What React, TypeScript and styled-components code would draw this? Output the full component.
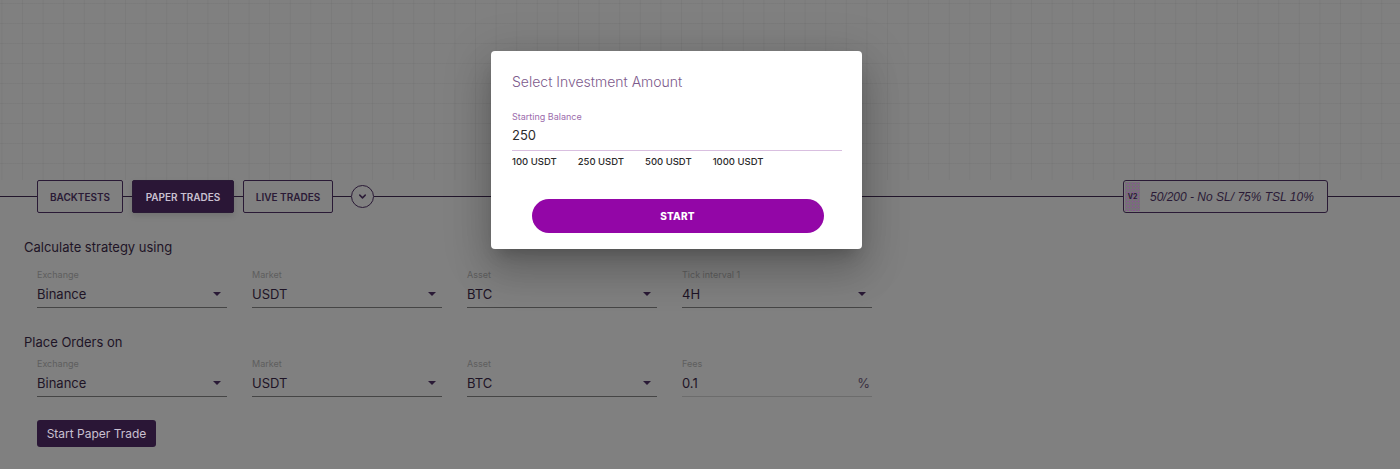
import React from "react";
import styled, { createGlobalStyle } from "styled-components";

const GlobalStyle = createGlobalStyle`
  html, body { margin: 0; padding: 0; }
  body {
    background: #808080;
    font-family: Inter, "Noto Sans", "Liberation Sans", sans-serif;
    color: #1e1426;
  }
  * { box-sizing: border-box; }
`;

const Page = styled.div`
  position: relative;
  width: 1400px;
  height: 469px;
  overflow: hidden;
  background: #808080;
`;

const ChartArea = styled.div`
  height: 180px;
  background-color: #808080;
  background-image:
    linear-gradient(to right, rgba(60, 60, 60, 0.07) 1px, transparent 1px),
    linear-gradient(to bottom, rgba(60, 60, 60, 0.07) 1px, transparent 1px);
  background-size: 20.6px 20px;
  background-position: 22px 3px;
`;

const TabBar = styled.div`
  display: flex;
  align-items: center;
  height: 33px;
`;

const Line = styled.div<{ $w?: number }>`
  height: 1px;
  background: #22162c;
  ${(p) => (p.$w ? `width: ${p.$w}px; flex: none;` : `flex: 1;`)}
`;

const Tab = styled.button<{ $active?: boolean; $w: number }>`
  flex: none;
  width: ${(p) => p.$w}px;
  height: 33px;
  padding: 0;
  border: 1px solid #2a1a36;
  border-radius: 2px;
  background: ${(p) => (p.$active ? "#2a1636" : "transparent")};
  color: ${(p) => (p.$active ? "#c9c0d0" : "#2a1a36")};
  font-family: inherit;
  font-size: 10px;
  font-weight: 600;
  text-transform: uppercase;
  box-shadow: ${(p) => (p.$active ? "0 3px 6px rgba(0,0,0,0.12)" : "none")};
`;

const CircleBtn = styled.div`
  flex: none;
  width: 23px;
  height: 23px;
  border: 1px solid #2a1a36;
  border-radius: 50%;
  display: flex;
  align-items: center;
  justify-content: center;
`;

const Badge = styled.div`
  flex: none;
  width: 205px;
  height: 33px;
  border: 1px solid #2a1a36;
  border-radius: 3px;
  display: flex;
  align-items: stretch;
  padding: 1px;
`;

const BadgeTag = styled.div`
  width: 15px;
  flex: none;
  display: flex;
  align-items: center;
  justify-content: center;
  font-size: 7px;
  font-weight: 700;
  color: #2a1a36;
  background-color: #767078;
  background-image: radial-gradient(circle, rgba(170, 40, 190, 0.5) 0.6px, transparent 1px);
  background-size: 3px 3px;
`;

const BadgeText = styled.div`
  display: flex;
  align-items: center;
  padding-left: 10px;
  font-family: "Liberation Sans", Arial, sans-serif;
  font-size: 12px;
  font-style: italic;
  color: #2a1a36;
  white-space: nowrap;
`;

const Form = styled.div`
  padding-left: 24px;
`;

const SectionTitle = styled.div<{ $mt: number }>`
  margin-top: ${(p) => p.$mt}px;
  font-size: 13px;
  line-height: 16px;
  color: #1e1426;
`;

const FieldRow = styled.div<{ $mt: number }>`
  display: grid;
  grid-template-columns: repeat(4, 190px);
  column-gap: 25px;
  margin-top: ${(p) => p.$mt}px;
  margin-left: 13px;
`;

const Field = styled.div<{ $light?: boolean }>`
  display: flex;
  flex-direction: column;
  border-bottom: 1px solid ${(p) => (p.$light ? "#6c6c6c" : "#454545")};
`;

const FieldLabel = styled.div`
  font-size: 9px;
  line-height: 12px;
  color: #5e5e5e;
`;

const FieldValue = styled.div`
  display: flex;
  align-items: center;
  justify-content: space-between;
  margin-top: 4px;
  padding-bottom: 4px;
  font-size: 13px;
  line-height: 18px;
  color: #1e1426;
`;

const Caret = styled.span`
  width: 0;
  height: 0;
  margin-right: 6px;
  border-left: 4px solid transparent;
  border-right: 4px solid transparent;
  border-top: 4px solid #2a1a36;
`;

const Suffix = styled.span`
  margin-right: 2px;
  color: #3a3040;
`;

const PrimaryDark = styled.button`
  margin-top: 23px;
  margin-left: 13px;
  width: 119px;
  height: 27px;
  padding: 0;
  border: none;
  border-radius: 3px;
  background: #2a1636;
  color: #c9c0d0;
  font-family: inherit;
  font-size: 12px;
`;

const Modal = styled.div`
  position: absolute;
  left: 491px;
  top: 51px;
  width: 371px;
  height: 198px;
  background: #ffffff;
  border-radius: 4px;
  box-shadow: 0 11px 15px -7px rgba(0, 0, 0, 0.2), 0 24px 38px 3px rgba(0, 0, 0, 0.14),
    0 9px 46px 8px rgba(0, 0, 0, 0.12);
  padding: 22px 20px 16px 21px;
  display: flex;
  flex-direction: column;
`;

const ModalTitle = styled.div`
  font-size: 14px;
  line-height: 18px;
  font-weight: 300;
  color: #7d5a8c;
`;

const InputBox = styled.div`
  margin-top: 20px;
  border-bottom: 1px solid #d9bfe0;
  padding-bottom: 6px;
`;

const InputLabel = styled.div`
  font-size: 9px;
  line-height: 11px;
  color: #9c6cac;
`;

const InputValue = styled.div`
  margin-top: 4px;
  font-size: 13px;
  line-height: 18px;
  color: #2c2c2c;
`;

const Chips = styled.div`
  display: flex;
  gap: 21px;
  margin-top: 4px;
`;

const Chip = styled.span`
  font-size: 9.5px;
  line-height: 14px;
  font-weight: 500;
  color: #2c2c2c;
`;

const StartButton = styled.button`
  align-self: center;
  margin-top: 30px;
  margin-left: 1px;
  width: 292px;
  height: 34px;
  border: none;
  border-radius: 17px;
  background: #9306a7;
  color: #ffffff;
  font-family: inherit;
  font-size: 10px;
  font-weight: 800;
  letter-spacing: 0.2px;
`;

type F = { label: string; value: string; suffix?: string };

const row1: F[] = [
  { label: "Exchange", value: "Binance" },
  { label: "Market", value: "USDT" },
  { label: "Asset", value: "BTC" },
  { label: "Tick interval 1", value: "4H" },
];

const row2: F[] = [
  { label: "Exchange", value: "Binance" },
  { label: "Market", value: "USDT" },
  { label: "Asset", value: "BTC" },
  { label: "Fees", value: "0.1", suffix: "%" },
];

const Fields = ({ items, mt }: { items: F[]; mt: number }) => (
  <FieldRow $mt={mt}>
    {items.map((f, i) => (
      <Field key={i} $light={!!f.suffix}>
        <FieldLabel>{f.label}</FieldLabel>
        <FieldValue>
          <span>{f.value}</span>
          {f.suffix ? <Suffix>{f.suffix}</Suffix> : <Caret />}
        </FieldValue>
      </Field>
    ))}
  </FieldRow>
);

export default function App() {
  return (
    <>
      <GlobalStyle />
      <Page>
        <ChartArea />
        <TabBar>
          <Line $w={37} />
          <Tab $w={86}>Backtests</Tab>
          <Line $w={9} />
          <Tab $w={102} $active>
            Paper Trades
          </Tab>
          <Line $w={9} />
          <Tab $w={90}>Live Trades</Tab>
          <Line $w={18} />
          <CircleBtn>
            <svg width="11" height="11" viewBox="0 0 12 12" fill="none">
              <path d="M3 4.5 L6 7.5 L9 4.5" stroke="#2a1a36" strokeWidth="1.6" strokeLinecap="round" strokeLinejoin="round" />
            </svg>
          </CircleBtn>
          <Line />
          <Badge>
            <BadgeTag>V2</BadgeTag>
            <BadgeText>50/200 - No SL/ 75% TSL 10%</BadgeText>
          </Badge>
          <Line $w={72} />
        </TabBar>
        <Form>
          <SectionTitle $mt={26}>Calculate strategy using</SectionTitle>
          <Fields items={row1} mt={14} />
          <SectionTitle $mt={26}>Place Orders on</SectionTitle>
          <Fields items={row2} mt={8} />
          <PrimaryDark>Start Paper Trade</PrimaryDark>
        </Form>
        <Modal>
          <ModalTitle>Select Investment Amount</ModalTitle>
          <InputBox>
            <InputLabel>Starting Balance</InputLabel>
            <InputValue>250</InputValue>
          </InputBox>
          <Chips>
            <Chip>100 USDT</Chip>
            <Chip>250 USDT</Chip>
            <Chip>500 USDT</Chip>
            <Chip>1000 USDT</Chip>
          </Chips>
          <StartButton>START</StartButton>
        </Modal>
      </Page>
    </>
  );
}
